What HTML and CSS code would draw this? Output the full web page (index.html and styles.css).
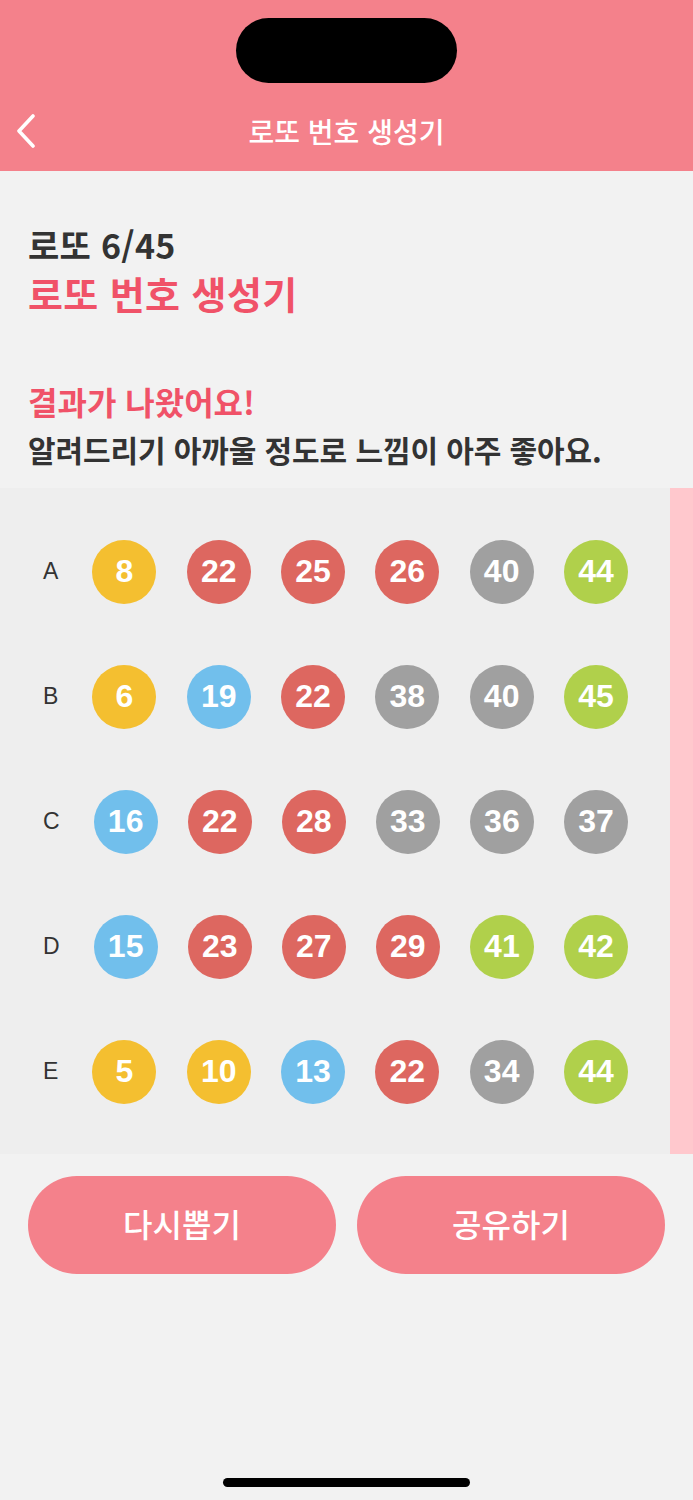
FILE: index.html
```html
<!DOCTYPE html>
<html lang="ko">
<head>
<meta charset="utf-8">
<title>로또 번호 생성기</title>
<link rel="stylesheet" href="styles.css">
</head>
<body>
<div class="screen">
  <header class="header">
    <div class="status">
      <div class="island"></div>
    </div>
    <nav class="nav">
      <div class="nav-left">
        <svg class="back" width="22" height="34" viewBox="0 0 22 34" aria-hidden="true">
          <path d="M18 2 L4 17 L18 32" fill="none" stroke="#fff" stroke-width="3.6" stroke-linecap="round" stroke-linejoin="round"/>
        </svg>
      </div>
      <div class="nav-title">로또 번호 생성기</div>
      <div class="nav-right"></div>
    </nav>
  </header>

  <main class="content">
    <section class="intro">
      <div class="subtitle">로또 6/45</div>
      <h1 class="title">로또 번호 생성기</h1>
    </section>

    <section class="result">
      <div class="result-head">결과가 나왔어요!</div>
      <div class="result-desc">알려드리기 아까울 정도로 느낌이 아주 좋아요.</div>
    </section>

    <section class="panel">
      <div class="rows">
        <div class="row">
          <span class="label">A</span>
          <div class="balls">
            <span class="ball yellow">8</span>
            <span class="ball red">22</span>
            <span class="ball red">25</span>
            <span class="ball red">26</span>
            <span class="ball gray">40</span>
            <span class="ball green">44</span>
          </div>
        </div>
        <div class="row">
          <span class="label">B</span>
          <div class="balls">
            <span class="ball yellow">6</span>
            <span class="ball blue">19</span>
            <span class="ball red">22</span>
            <span class="ball gray">38</span>
            <span class="ball gray">40</span>
            <span class="ball green">45</span>
          </div>
        </div>
        <div class="row">
          <span class="label">C</span>
          <div class="balls">
            <span class="ball blue">16</span>
            <span class="ball red">22</span>
            <span class="ball red">28</span>
            <span class="ball gray">33</span>
            <span class="ball gray">36</span>
            <span class="ball gray">37</span>
          </div>
        </div>
        <div class="row">
          <span class="label">D</span>
          <div class="balls">
            <span class="ball blue">15</span>
            <span class="ball red">23</span>
            <span class="ball red">27</span>
            <span class="ball red">29</span>
            <span class="ball green">41</span>
            <span class="ball green">42</span>
          </div>
        </div>
        <div class="row">
          <span class="label">E</span>
          <div class="balls">
            <span class="ball yellow">5</span>
            <span class="ball yellow">10</span>
            <span class="ball blue">13</span>
            <span class="ball red">22</span>
            <span class="ball gray">34</span>
            <span class="ball green">44</span>
          </div>
        </div>
      </div>
      <div class="scrollbar"></div>
    </section>

    <section class="actions">
      <button class="btn">다시뽑기</button>
      <button class="btn">공유하기</button>
    </section>

    <div class="home-bar"></div>
  </main>
</div>
</body>
</html>
```

FILE: styles.css
```css
* {
  box-sizing: border-box;
}

html, body {
  margin: 0;
  padding: 0;
}

body {
  background: #f2f2f2;
  font-family: "Noto Sans CJK KR", "Noto Sans", sans-serif;
  color: #333333;
  overflow: hidden;
}

.screen {
  width: 693px;
  height: 1500px;
  display: flex;
  flex-direction: column;
}

.header {
  background: #f4818b;
  height: 171px;
  display: flex;
  flex-direction: column;
}

.status {
  height: 91px;
  padding-top: 18px;
  display: flex;
  justify-content: center;
}

.island {
  width: 221px;
  height: 65px;
  background: #000;
  border-radius: 33px;
}

.nav {
  height: 80px;
  display: grid;
  grid-template-columns: 1fr auto 1fr;
  align-items: center;
}

.nav-left {
  padding-left: 15px;
  display: flex;
  align-items: center;
}

.back {
  display: block;
}

.nav-title {
  color: #ffffff;
  font-size: 28px;
  font-weight: 500;
  line-height: 40px;
}

.content {
  display: flex;
  flex-direction: column;
}

.intro {
  padding: 51px 28px 0;
}

.subtitle {
  font-size: 34px;
  font-weight: 700;
  line-height: 46px;
  color: #333333;
  letter-spacing: 0.3px;
}

.title {
  margin: 0;
  font-size: 38px;
  font-weight: 700;
  line-height: 50px;
  color: #f05268;
  letter-spacing: 0.4px;
}

.result {
  padding: 61px 28px 0;
}

.result-head {
  font-size: 32px;
  font-weight: 700;
  line-height: 44px;
  color: #f05268;
}

.result-desc {
  font-size: 30px;
  font-weight: 700;
  line-height: 52px;
  color: #333333;
  letter-spacing: -0.1px;
}

.panel {
  margin-top: 13px;
  height: 666px;
  display: flex;
  background: #eeeeee;
}

.rows {
  flex: 1;
  padding: 21px 42px 20px 43px;
  display: flex;
  flex-direction: column;
}

.row {
  height: 125px;
  display: flex;
  align-items: center;
}

.label {
  font-family: "Liberation Sans", Arial, sans-serif;
  font-size: 23px;
  color: #333333;
  margin-right: 34px;
}

.balls {
  flex: 1;
  display: flex;
  justify-content: space-between;
  align-items: center;
}

.ball {
  width: 64px;
  height: 64px;
  border-radius: 50%;
  display: flex;
  align-items: center;
  justify-content: center;
  color: #ffffff;
  font-family: "Liberation Sans", Arial, sans-serif;
  font-weight: 700;
  font-size: 32px;
}

.yellow { background: #f4bf30; }
.red { background: #dd6760; }
.gray { background: #a0a0a0; }
.blue { background: #71bfec; }
.green { background: #b0d04b; }

.scrollbar {
  width: 23px;
  background: #ffc8cd;
}

.actions {
  margin-top: 22px;
  padding: 0 28px;
  display: flex;
  gap: 21px;
}

.btn {
  flex: 1;
  height: 98px;
  border: none;
  border-radius: 49px;
  background: #f4818b;
  color: #ffffff;
  font-family: "Noto Sans CJK KR", "Noto Sans", sans-serif;
  font-size: 32px;
  font-weight: 500;
  line-height: 40px;
  padding: 0 0 4px;
}

.home-bar {
  margin: 204px auto 0;
  width: 247px;
  height: 9px;
  border-radius: 5px;
  background: #000;
}
```
